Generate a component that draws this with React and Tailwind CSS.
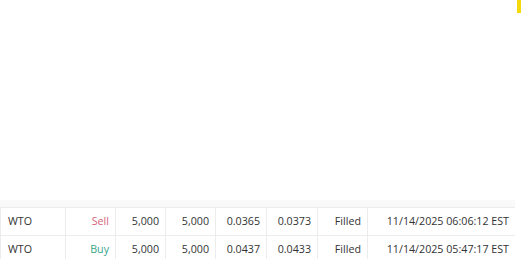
import React from 'react';

const rows = [
  { sym: 'WTO', side: 'Sell', qty: '5,000', filled: '5,000', limit: '0.0365', avg: '0.0373', status: 'Filled', time: '11/14/2025 06:06:12 EST' },
  { sym: 'WTO', side: 'Buy', qty: '5,000', filled: '5,000', limit: '0.0437', avg: '0.0433', status: 'Filled', time: '11/14/2025 05:47:17 EST' },
];

const Cell = ({ className = '', children }) => (
  <div className={`flex items-center justify-end border-r border-[#ececec] px-[6px] ${className}`}>{children}</div>
);

export default function App() {
  return (
    <div className="relative h-[259px] w-[523px] overflow-hidden bg-white text-[10.7px] text-[#333]" style={{ fontFamily: '"Open Sans", "Noto Sans", sans-serif' }}>
      <div className="absolute right-[2px] top-0 h-[13px] w-[4px] bg-[#f5d90a]" />
      <div className="h-[200px]" />
      <div className="h-[7px] w-[515px] bg-[#f9f9f9]" />
      <div className="w-[515px] border-l border-[#ececec]">
        {rows.map((r, i) => (
          <div key={i} className="grid h-[28px] grid-cols-[65px_50px_50px_50px_51px_51px_50px_1fr] border-t border-[#ececec]">
            <Cell className="!justify-start pl-[7px]">{r.sym}</Cell>
            <Cell className={r.side === 'Sell' ? 'text-[#d5647b]' : 'text-[#3aa68b]'}>{r.side}</Cell>
            <Cell>{r.qty}</Cell>
            <Cell>{r.filled}</Cell>
            <Cell>{r.limit}</Cell>
            <Cell>{r.avg}</Cell>
            <Cell>{r.status}</Cell>
            <Cell className="border-r-0">{r.time}</Cell>
          </div>
        ))}
      </div>
    </div>
  );
}
